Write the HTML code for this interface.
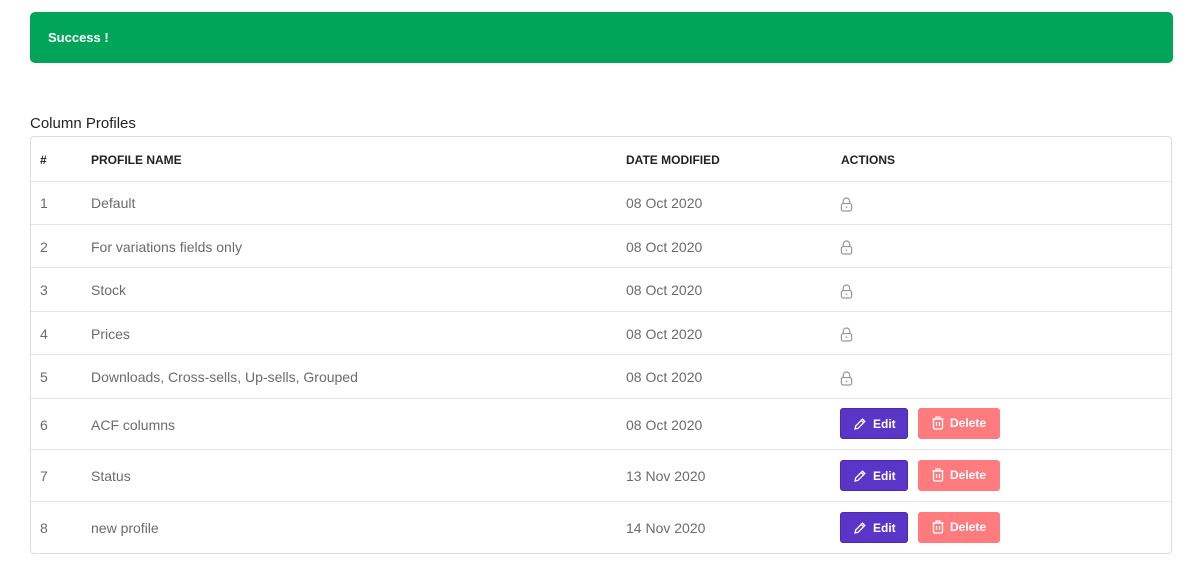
<!DOCTYPE html>
<html><head><style>
body{margin:0;width:1200px;height:573px;background:#fff;font-family:"Liberation Sans",sans-serif;position:relative;overflow:hidden}
.alert{position:absolute;left:30px;top:12px;width:1143px;height:51px;background:#00a55a;border-radius:5px;color:#fff;font-size:13px;font-weight:bold;line-height:51px;box-sizing:border-box;padding-left:18px}
.title{position:absolute;left:30px;top:115px;font-size:15px;color:#222}
.box{position:absolute;left:30px;top:136px;width:1142px;height:418px;border:1px solid #ddd;border-radius:4px;box-sizing:border-box}
.row{position:absolute;left:31px;width:1140px;border-bottom:1px solid #e6e6e6;font-size:14px;color:#6b6b6b}
.row span{position:absolute;top:1px}
.h{font-size:12px;font-weight:bold;color:#222}
.c1{left:9px}.c2{left:60px}.c3{left:595px}.c4{left:810px}
.btn{position:absolute;height:31px;border-radius:3px;color:#fff;font-size:12px;font-weight:bold;line-height:31px;box-sizing:border-box}
.edit{background:#5a35c8;width:68px;padding-left:12px;border:1px solid #4a2bb0}
.del{background:#ff7b7e;width:82px;padding-left:14px}
.btn svg{vertical-align:-3px;margin-right:6px}
</style></head><body>
<div class="alert">Success !</div>
<div class="title">Column Profiles</div>
<div class="box"></div>
<div class="row h" style="top:137px;height:44px;line-height:44px"><span class="c1">#</span><span class="c2">PROFILE NAME</span><span class="c3">DATE MODIFIED</span><span class="c4">ACTIONS</span></div>
<div class="row" style="top:181px;height:43px;line-height:43px"><span class="c1">1</span><span class="c2">Default</span><span class="c3">08 Oct 2020</span><span class="c4" style="left:809px;top:16px;line-height:0"><svg width="13" height="15" viewBox="0 0 14 16"><path d="M3.5 7V4.5a3.5 3.5 0 0 1 7 0V7" fill="none" stroke="#999" stroke-width="1.3"/><rect x="1.5" y="7" width="11" height="8" rx="2" fill="none" stroke="#999" stroke-width="1.3"/><circle cx="7" cy="11" r="0.9" fill="#999"/></svg></span></div>
<div class="row" style="top:225px;height:42px;line-height:42px"><span class="c1">2</span><span class="c2">For variations fields only</span><span class="c3">08 Oct 2020</span><span class="c4" style="left:809px;top:15px;line-height:0"><svg width="13" height="15" viewBox="0 0 14 16"><path d="M3.5 7V4.5a3.5 3.5 0 0 1 7 0V7" fill="none" stroke="#999" stroke-width="1.3"/><rect x="1.5" y="7" width="11" height="8" rx="2" fill="none" stroke="#999" stroke-width="1.3"/><circle cx="7" cy="11" r="0.9" fill="#999"/></svg></span></div>
<div class="row" style="top:268px;height:43px;line-height:43px"><span class="c1">3</span><span class="c2">Stock</span><span class="c3">08 Oct 2020</span><span class="c4" style="left:809px;top:16px;line-height:0"><svg width="13" height="15" viewBox="0 0 14 16"><path d="M3.5 7V4.5a3.5 3.5 0 0 1 7 0V7" fill="none" stroke="#999" stroke-width="1.3"/><rect x="1.5" y="7" width="11" height="8" rx="2" fill="none" stroke="#999" stroke-width="1.3"/><circle cx="7" cy="11" r="0.9" fill="#999"/></svg></span></div>
<div class="row" style="top:312px;height:42px;line-height:42px"><span class="c1">4</span><span class="c2">Prices</span><span class="c3">08 Oct 2020</span><span class="c4" style="left:809px;top:15px;line-height:0"><svg width="13" height="15" viewBox="0 0 14 16"><path d="M3.5 7V4.5a3.5 3.5 0 0 1 7 0V7" fill="none" stroke="#999" stroke-width="1.3"/><rect x="1.5" y="7" width="11" height="8" rx="2" fill="none" stroke="#999" stroke-width="1.3"/><circle cx="7" cy="11" r="0.9" fill="#999"/></svg></span></div>
<div class="row" style="top:355px;height:43px;line-height:43px"><span class="c1">5</span><span class="c2">Downloads, Cross-sells, Up-sells, Grouped</span><span class="c3">08 Oct 2020</span><span class="c4" style="left:809px;top:16px;line-height:0"><svg width="13" height="15" viewBox="0 0 14 16"><path d="M3.5 7V4.5a3.5 3.5 0 0 1 7 0V7" fill="none" stroke="#999" stroke-width="1.3"/><rect x="1.5" y="7" width="11" height="8" rx="2" fill="none" stroke="#999" stroke-width="1.3"/><circle cx="7" cy="11" r="0.9" fill="#999"/></svg></span></div>
<div class="row" style="top:399px;height:50px;line-height:50px"><span class="c1">6</span><span class="c2">ACF columns</span><span class="c3">08 Oct 2020</span></div>
<div class="row" style="top:450px;height:51px;line-height:51px"><span class="c1">7</span><span class="c2">Status</span><span class="c3">13 Nov 2020</span></div>
<div class="row" style="top:502px;height:51px;line-height:51px;border-bottom:none"><span class="c1">8</span><span class="c2">new profile</span><span class="c3">14 Nov 2020</span></div>

<div class="btn edit" style="left:840px;top:408px"><svg width="14" height="14" viewBox="0 0 14 14"><path d="M2 12l.7-3L9.5 2.2l2.3 2.3L5 11.3z M8.3 3.4l2.3 2.3" fill="none" stroke="#fff" stroke-width="1.3"/></svg>Edit</div>
<div class="btn del" style="left:918px;top:408px"><svg width="12" height="14" viewBox="0 0 12 14"><rect x="1.5" y="3" width="9" height="10" rx="1.5" fill="none" stroke="#fff" stroke-width="1.3"/><path d="M0.5 3h11M4 3V1h4v2M4.5 6v4M7.5 6v4" fill="none" stroke="#fff" stroke-width="1.2"/></svg>Delete</div>
<div class="btn edit" style="left:840px;top:460px"><svg width="14" height="14" viewBox="0 0 14 14"><path d="M2 12l.7-3L9.5 2.2l2.3 2.3L5 11.3z M8.3 3.4l2.3 2.3" fill="none" stroke="#fff" stroke-width="1.3"/></svg>Edit</div>
<div class="btn del" style="left:918px;top:460px"><svg width="12" height="14" viewBox="0 0 12 14"><rect x="1.5" y="3" width="9" height="10" rx="1.5" fill="none" stroke="#fff" stroke-width="1.3"/><path d="M0.5 3h11M4 3V1h4v2M4.5 6v4M7.5 6v4" fill="none" stroke="#fff" stroke-width="1.2"/></svg>Delete</div>
<div class="btn edit" style="left:840px;top:512px"><svg width="14" height="14" viewBox="0 0 14 14"><path d="M2 12l.7-3L9.5 2.2l2.3 2.3L5 11.3z M8.3 3.4l2.3 2.3" fill="none" stroke="#fff" stroke-width="1.3"/></svg>Edit</div>
<div class="btn del" style="left:918px;top:512px"><svg width="12" height="14" viewBox="0 0 12 14"><rect x="1.5" y="3" width="9" height="10" rx="1.5" fill="none" stroke="#fff" stroke-width="1.3"/><path d="M0.5 3h11M4 3V1h4v2M4.5 6v4M7.5 6v4" fill="none" stroke="#fff" stroke-width="1.2"/></svg>Delete</div>
</body></html>
